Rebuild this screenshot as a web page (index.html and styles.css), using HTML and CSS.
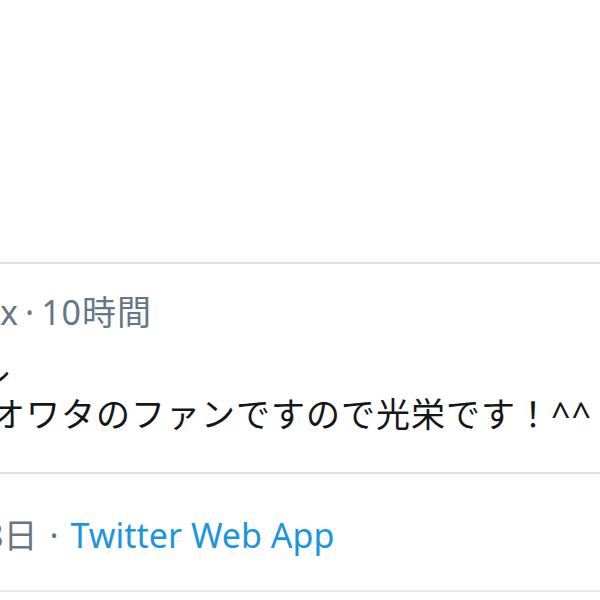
FILE: index.html
```html
<!DOCTYPE html>
<html lang="ja">
<head>
<meta charset="utf-8">
<link rel="stylesheet" href="styles.css">
</head>
<body>
<div class="page">
  <div class="blank"></div>
  <article class="tweet">
    <div class="meta"><span class="cut-meta">x</span><span class="dot">·</span><span class="time">10時間</span></div>
    <div class="body">
      <div class="line line-first">ル</div>
      <div class="line line-second">オワタのファンですので光栄です！^^</div>
    </div>
  </article>
  <div class="footer">
    <span class="cut-date">8日</span><span class="dot dot-footer">·</span><a class="source">Twitter Web App</a>
  </div>
  <div class="rest"></div>
</div>
</body>
</html>
```

FILE: styles.css
```css
html, body {
  margin: 0;
  padding: 0;
  background: #ffffff;
}
body {
  font-family: "Noto Sans", "Noto Sans CJK JP", sans-serif;
  font-size: 34px;
  color: #14171a;
  overflow: hidden;
  width: 600px;
  height: 600px;
}
.page {
  display: flex;
  flex-direction: column;
}
.blank {
  height: 262px;
}
.tweet {
  border-top: 2px solid #dde1e4;
  border-bottom: 2px solid #dde1e4;
  padding: 26px 0 36px 0;
}
.meta {
  display: flex;
  align-items: center;
  height: 44px;
  line-height: 44px;
  color: #657786;
  white-space: nowrap;
}
.cut-meta {
  margin-left: 0;
}
.dot {
  padding: 0 7px;
}
.time {
  letter-spacing: 1px;
}
.dot-footer {
  padding: 0 12px;
}
.body {
  margin-top: 14px;
}
.line {
  height: 44px;
  line-height: 44px;
  white-space: nowrap;
}
.line-first {
  margin-left: -24px;
}
.line-second {
  margin-left: -9px;
  letter-spacing: 1px;
}
.footer {
  display: flex;
  align-items: center;
  height: 44px;
  line-height: 44px;
  padding: 39px 0 33px 0;
  border-bottom: 2px solid #e4e8eb;
  color: #657786;
  white-space: nowrap;
}
.cut-date {
  margin-left: -16px;
}
.source {
  color: #1b95e0;
}
.rest {
  flex: 1;
}
```
